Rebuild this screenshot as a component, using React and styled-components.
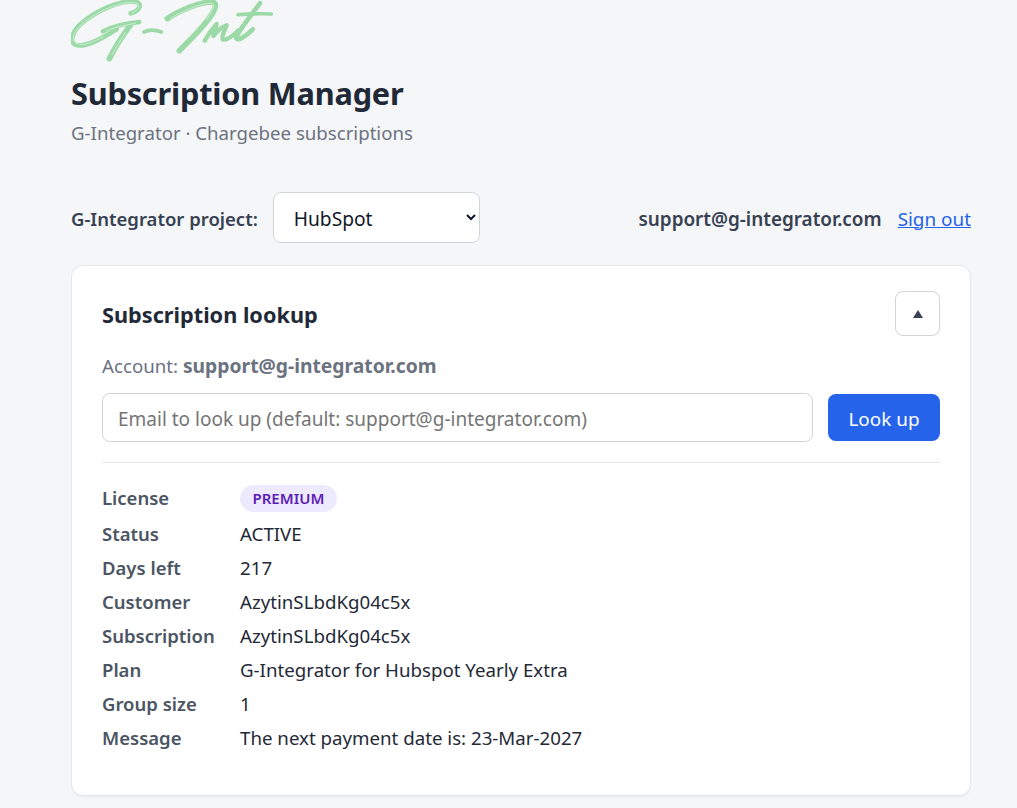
import styled, { createGlobalStyle } from "styled-components";

const rows = [
  { label: "Status", value: "ACTIVE" },
  { label: "Days left", value: "217" },
  { label: "Customer", value: "AzytinSLbdKg04c5x" },
  { label: "Subscription", value: "AzytinSLbdKg04c5x" },
  { label: "Plan", value: "G-Integrator for Hubspot Yearly Extra" },
  { label: "Group size", value: "1" },
  { label: "Message", value: "The next payment date is: 23-Mar-2027" },
];

// brush strokes of the logo, traced in 3x coordinates
const logoStrokes = [
  { d: "M212 40 C238 34 248 12 230 6 C190 -4 110 30 62 72 C34 98 30 126 46 134 C72 144 116 122 170 88", w: 14 },
  { d: "M128 94 C160 78 200 70 238 66", w: 13 },
  { d: "M212 74 C190 104 166 140 148 176", w: 17 },
  { d: "M252 96 C268 88 288 90 304 96", w: 11 },
  { d: "M322 56 C360 30 420 6 456 6 C476 8 464 34 442 62 C418 94 384 126 358 152", w: 17 },
  { d: "M434 122 C444 104 456 88 470 72 C466 88 462 100 460 108 C472 92 488 80 500 76 C494 92 484 108 488 118 C500 122 520 106 534 92", w: 13 },
  { d: "M600 10 C574 44 536 92 528 112 C532 126 556 110 578 88", w: 14 },
  { d: "M534 44 C566 42 600 40 634 42", w: 11 },
];

// thin light lines that run inside the thick strokes
const logoHighlights = [
  "M214 40 C236 32 244 14 228 9 C190 0 112 32 64 74 C38 98 34 122 48 130 C70 140 100 126 130 110",
  "M140 92 C170 80 200 74 226 70",
  "M330 56 C366 34 420 10 454 10 C468 12 458 32 440 58",
  "M196 98 C182 120 168 142 156 164",
];

export default function App() {
  return (
    <Page>
      <GlobalStyle />
      <Logo viewBox="0 0 690 210" aria-label="G-Int">
        {logoStrokes.map((s) => (
          <path key={s.d} d={s.d} strokeWidth={s.w} />
        ))}
        {logoHighlights.map((d) => (
          <Highlight key={d} d={d} />
        ))}
      </Logo>
      <Title>Subscription Manager</Title>
      <Subtitle>G-Integrator · Chargebee subscriptions</Subtitle>

      <Toolbar>
        <ProjectLabel>
          <ProjectText>G-Integrator project:</ProjectText>
          <ProjectSelect defaultValue="HubSpot">
            <option>HubSpot</option>
          </ProjectSelect>
        </ProjectLabel>
        <UserBox>
          <UserEmail>support@g-integrator.com</UserEmail>
          <SignOut href="#">Sign out</SignOut>
        </UserBox>
      </Toolbar>

      <Card>
        <CardHeader>
          <CardTitle>Subscription lookup</CardTitle>
          <ToggleButton aria-label="Collapse">
            <svg width="10" height="8" viewBox="0 0 10 8">
              <path d="M5 0 L10 8 L0 8 Z" fill="#374151" />
            </svg>
          </ToggleButton>
        </CardHeader>
        <Account>
          Account: <strong>support@g-integrator.com</strong>
        </Account>
        <SearchRow>
          <SearchInput placeholder="Email to look up (default: support@g-integrator.com)" />
          <LookupButton>Look up</LookupButton>
        </SearchRow>
        <Divider />
        <Details>
          <LicenseLabel>License</LicenseLabel>
          <LicenseValue>
            <Pill>PREMIUM</Pill>
          </LicenseValue>
          {rows.map((r) => (
            <Row key={r.label}>
              <dt>{r.label}</dt>
              <dd>{r.value}</dd>
            </Row>
          ))}
        </Details>
      </Card>
    </Page>
  );
}

const GlobalStyle = createGlobalStyle`
  * {
    box-sizing: border-box;
  }

  body {
    margin: 0;
    background: #f5f6f8;
    font-family: "Noto Sans", "Open Sans", sans-serif;
    color: #111827;
  }
`;

const Page = styled.main`
  width: 900px;
  margin-left: 71px;
  height: 808px;
  overflow: hidden;
`;

const Logo = styled.svg`
  display: block;
  width: 230px;
  height: 70px;
  margin-left: -11px;

  path {
    fill: none;
    stroke: #9bdaa6;
    stroke-linecap: round;
    stroke-linejoin: round;
  }
`;

const Highlight = styled.path`
  && {
    stroke: #e3f5e7;
    stroke-width: 2;
  }
`;

const Title = styled.h1`
  margin: 2px 0 0;
  font-size: 30.7px;
  line-height: 42px;
  font-weight: 700;
  color: #1f2937;
  letter-spacing: -0.2px;
`;

const Subtitle = styled.p`
  margin: 6px 0 0;
  font-size: 18.65px;
  line-height: 26px;
  color: #6b7280;
`;

const Toolbar = styled.div`
  display: flex;
  align-items: center;
  justify-content: space-between;
  margin-top: 46px;
  height: 51px;
`;

const ProjectLabel = styled.label`
  display: flex;
  align-items: center;
  gap: 15px;
  font-size: 18.5px;
  font-weight: 600;
  color: #374151;
`;

const ProjectText = styled.span`
  padding-top: 2px;
`;

const ProjectSelect = styled.select`
  width: 207px;
  height: 51px;
  padding: 2px 16px 0;
  background: #fff;
  border: 1px solid #d1d5db;
  border-radius: 8px;
  font: inherit;
  font-size: 19.2px;
  font-weight: 400;
  color: #111827;
`;

const UserBox = styled.div`
  display: flex;
  align-items: center;
  gap: 16px;
  padding-top: 2px;
  font-size: 18.9px;
`;

const UserEmail = styled.span`
  font-weight: 600;
  color: #374151;
`;

const SignOut = styled.a`
  color: #2563eb;
`;

const Card = styled.section`
  margin-top: 22px;
  height: 531px;
  padding: 25px 30px;
  background: #fff;
  border: 1px solid #e5e7eb;
  border-radius: 12px;
  box-shadow: 0 1px 2px rgba(0, 0, 0, 0.05);
`;

const CardHeader = styled.div`
  display: flex;
  align-items: center;
  justify-content: space-between;
`;

const CardTitle = styled.h2`
  margin: 0;
  padding-top: 2px;
  font-size: 21.7px;
  font-weight: 700;
  color: #1f2937;
`;

const ToggleButton = styled.button`
  display: flex;
  align-items: center;
  justify-content: center;
  width: 45px;
  height: 45px;
  background: #fff;
  border: 1px solid #d1d5db;
  border-radius: 8px;
`;

const Account = styled.div`
  margin-top: 17px;
  font-size: 18.7px;
  line-height: 26px;
  color: #6b7280;

  strong {
    font-size: 19.3px;
    font-weight: 700;
  }
`;

const SearchRow = styled.div`
  display: flex;
  align-items: center;
  gap: 15px;
  margin-top: 14px;
`;

const SearchInput = styled.input`
  flex: 1;
  height: 49px;
  padding: 2px 15px 0;
  border: 1px solid #d1d5db;
  border-radius: 8px;
  font: inherit;
  font-size: 19px;
  color: #111827;

  &::placeholder {
    color: #757575;
  }
`;

const LookupButton = styled.button`
  width: 112px;
  height: 47px;
  padding: 2px 0 0;
  background: #2563eb;
  border: 0;
  border-radius: 8px;
  font: inherit;
  font-size: 18.9px;
  color: #fff;
`;

const Divider = styled.hr`
  margin: 20px 0 0;
  border: 0;
  border-top: 1px solid #e5e7eb;
`;

const Details = styled.dl`
  display: grid;
  grid-template-columns: 138px 1fr;
  margin: 21px 0 0;
  font-size: 18.7px;
  line-height: 34px;
`;

const LicenseLabel = styled.dt`
  font-weight: 600;
  font-size: 18.5px;
  color: #4b5563;
  line-height: 28px;
  margin-bottom: 5px;
`;

const LicenseValue = styled.dd`
  margin: 0 0 5px;
  display: flex;
  align-items: center;
`;

const Pill = styled.span`
  padding: 0 12.5px;
  height: 27px;
  line-height: 27px;
  border-radius: 999px;
  background: #ede9fe;
  color: #5b21b6;
  font-size: 15px;
  font-weight: 600;
`;

const Row = styled.div`
  display: contents;

  dt {
    font-weight: 600;
    font-size: 18.5px;
    color: #4b5563;
  }

  dd {
    margin: 0;
    color: #1f2937;
  }
`;
